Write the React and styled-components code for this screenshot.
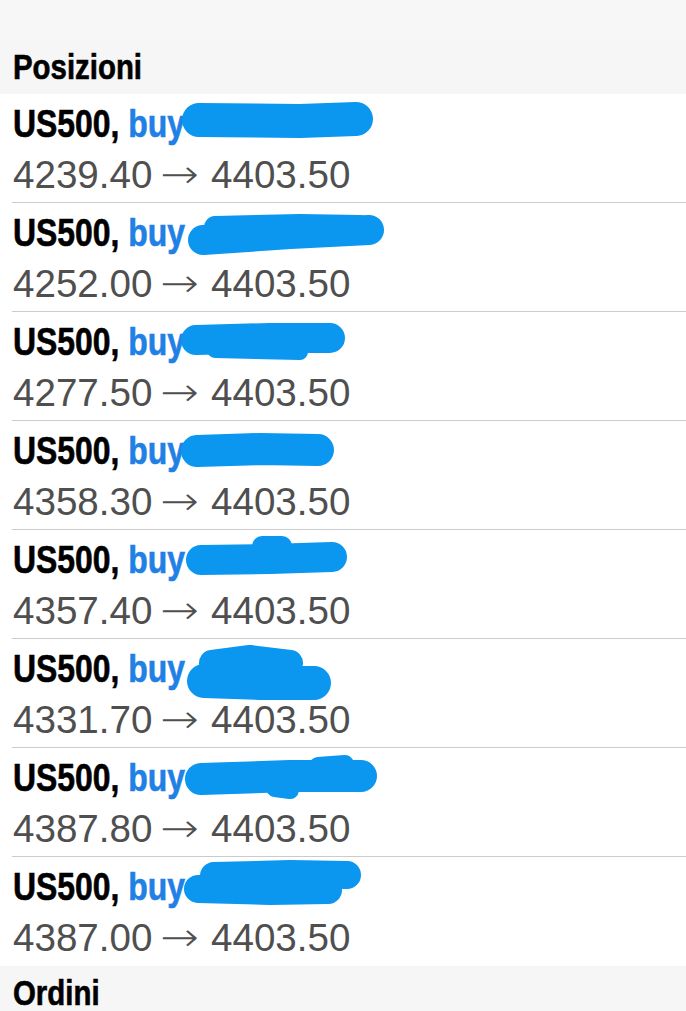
import styled, { createGlobalStyle } from 'styled-components';

const GlobalStyle = createGlobalStyle`
  html, body {
    margin: 0;
    padding: 0;
    background: #ffffff;
  }
  body {
    font-family: 'Liberation Sans', Arial, sans-serif;
    -webkit-font-smoothing: antialiased;
  }
`;

const positions = [
  {
    open: '4239.40',
    strokes: [{ w: 34, pts: '199,26 300,27 356,25' }],
  },
  {
    open: '4252.00',
    strokes: [
      { w: 30, pts: '203,37 290,31 369,27' },
      { w: 22, pts: '215,24 300,22 360,23' },
    ],
  },
  {
    open: '4277.50',
    strokes: [
      { w: 30, pts: '196,28 270,26 330,26' },
      { w: 16, pts: '215,38 300,40' },
    ],
  },
  {
    open: '4358.30',
    strokes: [{ w: 32, pts: '197,30 260,28 318,29' }],
  },
  {
    open: '4357.40',
    strokes: [
      { w: 30, pts: '201,30 270,29 332,27' },
      { w: 20, pts: '262,16 282,16' },
    ],
  },
  {
    open: '4331.70',
    strokes: [
      { w: 34, pts: '204,42 260,44 314,44' },
      { w: 26, pts: '212,24 250,19 290,24' },
    ],
  },
  {
    open: '4387.80',
    strokes: [
      { w: 32, pts: '201,31 290,28 361,28' },
      { w: 18, pts: '318,18 345,16' },
      { w: 18, pts: '275,40 290,42' },
    ],
  },
  {
    open: '4387.00',
    strokes: [
      { w: 28, pts: '214,19 290,17 347,18' },
      { w: 28, pts: '198,32 270,34 328,33' },
    ],
  },
];

const Redaction = ({ strokes }) => (
  <Scribble viewBox="0 0 686 109" width="686" height="109">
    {strokes.map((s, i) => (
      <polyline
        key={i}
        points={s.pts}
        fill="none"
        stroke="#0b96ef"
        strokeWidth={s.w}
        strokeLinecap="round"
        strokeLinejoin="round"
      />
    ))}
  </Scribble>
);

const App = () => {
  return (
    <Page>
      <GlobalStyle />
      <TopBar />
      <SectionHeader>
        <Condensed>Posizioni</Condensed>
      </SectionHeader>
      <List>
        {positions.map((p, i) => (
          <Row key={i} $last={i === positions.length - 1}>
            <TitleLine>
              <Condensed>
                <Symbol>US500,</Symbol> <Side>buy</Side>
              </Condensed>
            </TitleLine>
            <PriceLine>
              {p.open}
              <Arrow>{'\u2192'}</Arrow>
              4403.50
            </PriceLine>
            <Redaction strokes={p.strokes} />
          </Row>
        ))}
      </List>
      <SectionHeader>
        <Condensed>Ordini</Condensed>
      </SectionHeader>
    </Page>
  );
};

const Page = styled.div`
  display: flex;
  flex-direction: column;
  width: 100%;
  height: 1011px;
  overflow: hidden;
  background-color: #ffffff;

  & > * {
    flex-shrink: 0;
  }
`;

const TopBar = styled.div`
  height: 40px;
  background-color: #f7f7f7;
`;

const Condensed = styled.span`
  display: inline-block;
  white-space: nowrap;
  transform: scaleX(0.84);
  transform-origin: left center;
  -webkit-text-stroke: 0.6px currentColor;
`;

const SectionHeader = styled.div`
  height: 54px;
  line-height: 54px;
  padding-left: 13px;
  background-color: #f6f6f6;
  font-family: 'Liberation Sans', sans-serif;
  font-weight: bold;
  font-size: 35px;
  color: #000000;
`;

const List = styled.div`
  display: flex;
  flex-direction: column;
  padding-left: 12px;
  background-color: #ffffff;
`;

const Row = styled.div`
  position: relative;
  display: flex;
  flex-direction: column;
  gap: 5px;
  padding: 7px 0 ${(p) => (p.$last ? '5px' : '4px')} 1px;
  border-bottom: ${(p) => (p.$last ? 'none' : '1px solid #cbcbcf')};
`;

const TitleLine = styled.div`
  height: 46px;
  line-height: 46px;
  font-family: 'Liberation Sans', sans-serif;
  font-weight: bold;
  font-size: 38px;
`;

const Symbol = styled.span`
  color: #000000;
`;

const Side = styled.span`
  color: #1f80e5;
`;

const PriceLine = styled.div`
  display: flex;
  align-items: center;
  height: 46px;
  line-height: 46px;
  font-size: 38.6px;
  color: #4f4f4f;
`;

const Arrow = styled.span`
  font-family: 'DejaVu Sans', sans-serif;
  font-weight: 200;
  font-size: 40px;
  line-height: 46px;
  margin: -2px 14px 0 11px;
  display: inline-block;
  transform: scaleX(1.15);
`;

const Scribble = styled.svg`
  position: absolute;
  top: 0;
  left: -12px;
  pointer-events: none;
`;

export default App;
